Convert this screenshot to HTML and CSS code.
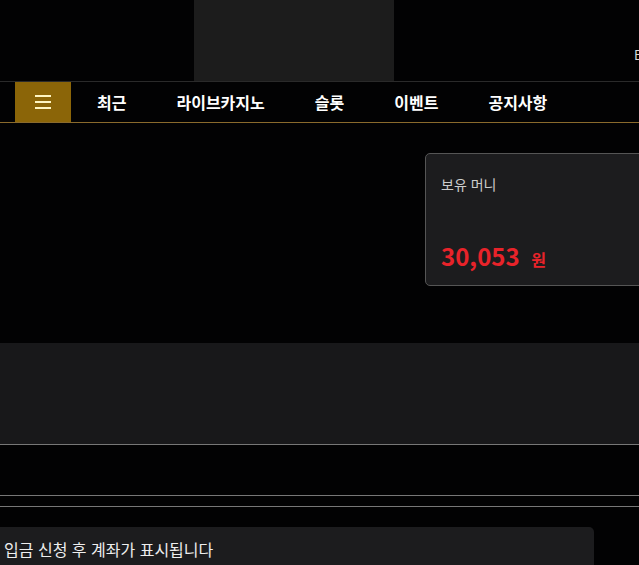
FILE: index.html
```html
<!DOCTYPE html>
<html lang="ko">
<head>
    <meta charset="UTF-8">
    <meta name="viewport" content="width=device-width, initial-scale=1.0">
    <title>보유 머니</title>
    <link rel="stylesheet" href="styles.css">
</head>
<body>
    <header class="top-bar">
        <div class="logo-slot"></div>
        <span class="lang">ENG</span>
    </header>

    <nav class="main-nav">
        <button class="menu-btn" aria-label="메뉴">
            <span></span><span></span><span></span>
        </button>
        <a href="#">최근</a>
        <a href="#">라이브카지노</a>
        <a href="#">슬롯</a>
        <a href="#">이벤트</a>
        <a href="#">공지사항</a>
    </nav>

    <section class="wallet">
        <div class="balance-card">
            <p class="balance-label">보유 머니</p>
            <p class="balance-amount">30,053 <small>원</small></p>
        </div>
    </section>

    <div class="banner"></div>
    <div class="spacer"></div>
    <div class="divider"></div>

    <div class="notice">입금 신청 후 계좌가 표시됩니다</div>
</body>
</html>
```

FILE: styles.css
```css
html, body {
    overflow: hidden;
}
body {
    margin: 0;
    background-color: #020203;
    color: #fff;
    font-family: "Noto Sans CJK KR", "Noto Sans", sans-serif;
    width: 639px;
}
.top-bar {
    display: flex;
    align-items: center;
    height: 81px;
    border-bottom: 1px solid #2a2a2a;
}
.logo-slot {
    flex-shrink: 0;
    width: 200px;
    height: 81px;
    margin-left: 194px;
    background-color: #1c1c1c;
}
.lang {
    flex-shrink: 0;
    margin-left: 240px;
    margin-top: 28px;
    font-size: 13px;
    color: #ddd;
    white-space: nowrap;
}
.main-nav {
    display: flex;
    align-items: center;
    height: 40px;
    border-bottom: 1px solid #8a6a2c;
}
.menu-btn {
    flex-shrink: 0;
    width: 56px;
    height: 40px;
    margin-left: 15px;
    margin-right: 26px;
    background-color: #8b6508;
    border: none;
    display: flex;
    flex-direction: column;
    justify-content: center;
    align-items: center;
    gap: 4px;
    padding: 0;
}
.menu-btn span {
    display: block;
    width: 16px;
    height: 2px;
    background-color: #fff6c2;
}
.main-nav a {
    flex-shrink: 0;
    color: #fff;
    text-decoration: none;
    font-weight: bold;
    font-size: 16px;
    margin-right: 50px;
}
.wallet {
    padding: 30px 0 0 425px;
    height: 220px;
    box-sizing: border-box;
}
.balance-card {
    width: 260px;
    height: 133px;
    box-sizing: border-box;
    background-color: #1c1c1e;
    border: 1px solid #555;
    border-radius: 5px;
    padding: 20px 15px 0;
}
.balance-label {
    margin: 0;
    font-size: 14px;
    color: #ccc;
}
.balance-amount {
    margin: 44px 0 0;
    font-size: 24px;
    font-weight: bold;
    color: #e8232a;
}
.balance-amount small {
    font-size: 16px;
    margin-left: 5px;
}
.banner {
    height: 101px;
    background-color: #18181a;
    border-bottom: 1px solid #777;
}
.spacer {
    height: 50px;
    border-bottom: 1px solid #777;
}
.divider {
    height: 10px;
    border-bottom: 1px solid #777;
}
.notice {
    margin-top: 20px;
    width: 590px;
    height: 38px;
    padding: 10px 0 0 4px;
    background-color: #1c1c1e;
    border-radius: 0 5px 0 0;
    font-size: 16px;
    color: #eee;
}
```
